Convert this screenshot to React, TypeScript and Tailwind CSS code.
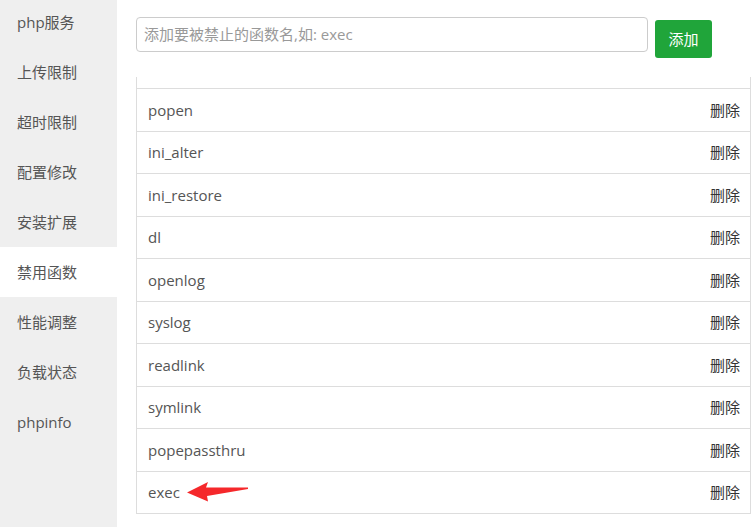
import React from 'react'

const menu = ['php服务', '上传限制', '超时限制', '配置修改', '安装扩展', '禁用函数', '性能调整', '负载状态', 'phpinfo']
const funcs = ['popen', 'ini_alter', 'ini_restore', 'dl', 'openlog', 'syslog', 'readlink', 'symlink', 'popepassthru', 'exec']

const font = { fontFamily: '"Open Sans", "Noto Sans CJK SC", sans-serif' }

function Arrow() {
  return (
    <svg width="64" height="24" viewBox="0 0 64 24" className="ml-[6px]">
      <path d="M1 12.5 L22 2 L20 7.5 L62 7.5 L62 9 L21 16 L22 21.5 Z" fill="#f5282b" />
    </svg>
  )
}

export default function App() {
  return (
    <div className="flex h-[527px] w-[752px] overflow-hidden bg-white" style={font}>
      <div className="w-[117px] shrink-0 bg-[#efefef]">
        <div className="mt-[-3px]">
          {menu.map((m) => (
            <div
              key={m}
              className={`flex h-[50px] items-center pl-[17px] text-[15px] text-[#555] ${m === '禁用函数' ? 'bg-white' : ''}`}
            >
              {m}
            </div>
          ))}
        </div>
      </div>
      <div className="flex-1 pl-[19px]">
        <div className="flex items-start pt-[17px]">
          <div className="flex h-[35px] w-[512px] items-center rounded-[4px] border border-[#ccc] px-[7px] text-[15px] text-[#999]">
            添加要被禁止的函数名,如: exec
          </div>
          <button className="ml-[7px] mt-[3px] h-[38px] w-[57px] rounded-[3px] bg-[#20a53a] text-[15px] text-white">
            添加
          </button>
        </div>
        <div className="mt-[19px] w-[615px] border-x border-[#ddd]">
          <div className="h-[12px] border-b border-[#ddd]" />
          {funcs.map((f) => (
            <div key={f} className="flex h-[42.5px] items-center justify-between border-b border-[#ddd] pl-[11px] pr-[10px]">
              <div className="flex items-center">
                <span className="text-[15px] text-[#555]">{f}</span>
                {f === 'exec' && <Arrow />}
              </div>
              <span className="text-[15px] text-[#333]">删除</span>
            </div>
          ))}
        </div>
      </div>
    </div>
  )
}
